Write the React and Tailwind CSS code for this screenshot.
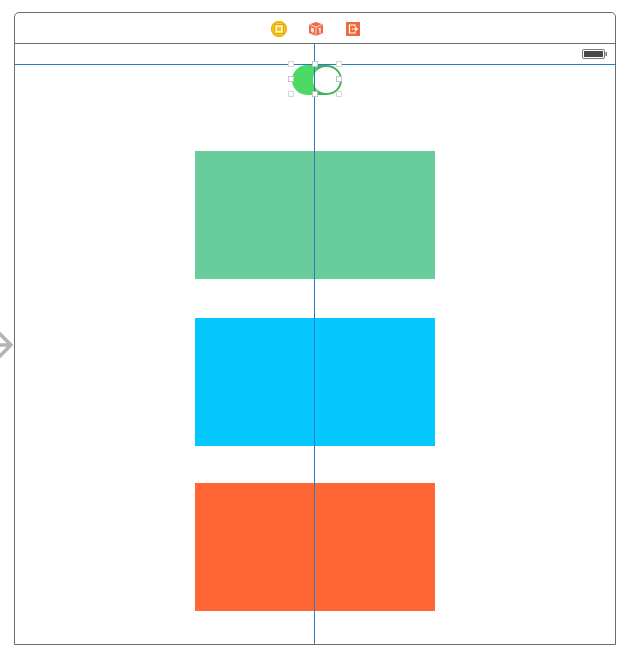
import React from "react";

const handleRows = [0, 1, 2];

function Handles() {
  return (
    <div className="absolute z-10 left-[-4px] top-[-4px] w-[54px] h-[36px] grid grid-cols-[6px_6px_6px] grid-rows-[6px_6px_6px] justify-between content-between">
      {handleRows.map((r) =>
        handleRows.map((c) =>
          r === 1 && c === 1 ? (
            <span key={`${r}-${c}`} />
          ) : (
            <span
              key={`${r}-${c}`}
              className={`w-[6px] h-[6px] bg-white border ${
                r === 1 || c === 1 ? "border-[#c4c4c4]" : "border-[#d8d8d8]"
              }`}
            />
          )
        )
      )}
    </div>
  );
}

function ToolbarIcons() {
  return (
    <div className="h-[30px] flex items-center justify-center pl-[1px] pt-[1px]">
      {/* first responder */}
      <svg width="16" height="16" viewBox="0 0 16 16" className="mr-[22px]">
        <circle cx="8" cy="8" r="8" fill="#f7c315" />
        <circle cx="8" cy="8" r="7.5" fill="none" stroke="#e8ad0c" strokeWidth="1" />
        <rect x="3.5" y="3.5" width="9" height="9" fill="#fbe58a" stroke="#e0a80c" strokeWidth="1" />
        <rect x="5.5" y="5.5" width="5" height="5" fill="#f7c315" stroke="#fff6c4" strokeWidth="1" />
      </svg>
      {/* cube */}
      <svg width="14" height="14" viewBox="0 0 14 14" className="mr-[23px]">
        <path d="M7 0 L14 2.5 V11 L7 14 L0 11 V2.5 Z" fill="#ef6a45" />
        <path d="M0.5 2.5 L7 5 L13.5 2.5" fill="none" stroke="#fbd5c8" strokeWidth="1" />
        <path d="M7 5 V14" stroke="#fbd5c8" strokeWidth="1" />
        <path d="M2 5.5 L5 6.6 V11 L2 9.8 Z" fill="#fbe3da" />
        <path d="M9.6 7 L11 6.4 V11" fill="none" stroke="#fff" strokeWidth="1.2" />
      </svg>
      {/* exit */}
      <svg width="14" height="14" viewBox="0 0 14 14">
        <rect width="14" height="14" fill="#f0693c" />
        <path d="M9 4.5 V3 H3.5 V11 H9 V9.5" fill="none" stroke="#fff" strokeWidth="1.2" />
        <path d="M6 7 H11 M9.3 5.2 L11.2 7 L9.3 8.8" fill="none" stroke="#fff" strokeWidth="1.2" />
      </svg>
    </div>
  );
}

export default function App() {
  return (
    <div className="relative w-[633px] h-[658px] bg-white overflow-hidden pt-[12px] pl-[14px]">
      {/* scene */}
      <div className="relative w-[602px] h-[633px] border border-[#6b6b6b] rounded-t-[5px]">
        <ToolbarIcons />
        <div className="h-[21px] border-t border-[#6b6b6b] flex items-center justify-end pr-[8px]">
          <svg width="25" height="10" viewBox="0 0 25 10">
            <rect x="0.5" y="0.5" width="22" height="9" rx="1.5" fill="none" stroke="#777" />
            <rect x="2" y="2" width="19" height="6" fill="#4a4a4a" />
            <rect x="23.5" y="3" width="1.5" height="4" fill="#777" />
          </svg>
        </div>
        <div className="border-t border-[#2b7bbd] flex flex-col items-center">
          <div className="relative w-[50px] h-[30px] ml-[4px] flex">
            <div className="w-[25px] h-[30px] rounded-l-[15px] bg-[#4cd964]" />
            <div className="w-[25px] h-[30px] rounded-r-[15px] bg-[#3fb45a]" />
            <div className="absolute right-[2px] top-[2px] w-[27px] h-[26px] rounded-full bg-white" />
            <Handles />
          </div>
          <div className="w-[240px] h-[128px] mt-[56px] bg-[#68cc9b]" />
          <div className="w-[240px] h-[128px] mt-[39px] bg-[#05c8ff]" />
          <div className="w-[240px] h-[128px] mt-[37px] bg-[#ff6633]" />
        </div>
        {/* vertical guide */}
        <div className="absolute left-[299px] top-[30px] bottom-0 w-px bg-[#2b7bbd]" />
      </div>
      {/* initial view controller arrow */}
      <svg className="absolute left-0 top-[332px]" width="14" height="26" viewBox="0 0 14 26">
        <path d="M-2 13 H9 M-1 1 L11 13 L-1 25" fill="none" stroke="#b4b4b4" strokeWidth="3.5" />
      </svg>
    </div>
  );
}
